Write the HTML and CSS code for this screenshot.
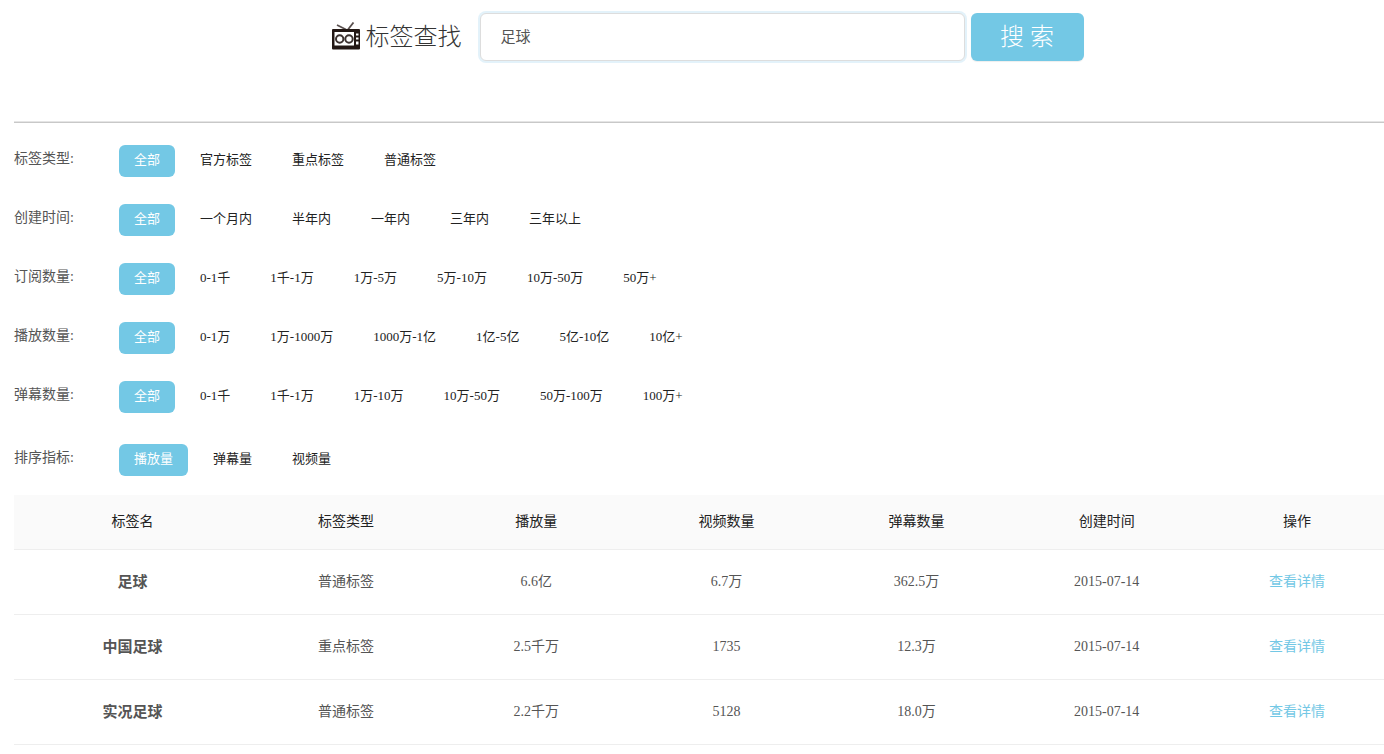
FILE: index.html
```html
<!DOCTYPE html>
<html lang="zh-CN">
<head>
<meta charset="utf-8">
<meta name="viewport" content="width=device-width, initial-scale=1">
<title>标签查找</title>
<link rel="stylesheet" href="styles.css">
</head>
<body>
<main class="page">
  <form class="search">
    <label class="search-label" for="keyword">
      <svg class="tv" viewBox="0 0 30 30" aria-hidden="true">
        <path d="M6 3L15 7.500M22.500 0.500L17 7.500" fill="none" stroke="#5a504f" stroke-width="1.800"/>
        <rect x="1" y="7" width="28" height="20.500" rx="1" fill="#231815"/>
        <rect x="3.500" y="10" width="19.500" height="13.500" fill="#fff"/>
        <circle cx="8.700" cy="17" r="3.700" fill="none" stroke="#3c3230" stroke-width="2"/>
        <circle cx="18" cy="17" r="3.700" fill="none" stroke="#3c3230" stroke-width="2"/>
        <path d="M25 11.500h2.500v2h-2.500zM25 15.500h2.500v2h-2.500zM25 19.500h2.500v3h-2.500z" fill="#fff"/>
      </svg>
      <span>标签查找</span>
    </label>
    <input class="search-input" id="keyword" type="text" value="足球">
    <button class="search-button" type="submit">搜 索</button>
  </form>
  <hr class="rule">
  <section class="filters">
    <div class="filter"><span class="filter-name">标签类型:</span><div class="options"><button class="option active">全部</button><button class="option">官方标签</button><button class="option">重点标签</button><button class="option">普通标签</button></div></div>
    <div class="filter"><span class="filter-name">创建时间:</span><div class="options"><button class="option active">全部</button><button class="option">一个月内</button><button class="option">半年内</button><button class="option">一年内</button><button class="option">三年内</button><button class="option">三年以上</button></div></div>
    <div class="filter"><span class="filter-name">订阅数量:</span><div class="options"><button class="option active">全部</button><button class="option">0-1千</button><button class="option">1千-1万</button><button class="option">1万-5万</button><button class="option">5万-10万</button><button class="option">10万-50万</button><button class="option">50万+</button></div></div>
    <div class="filter"><span class="filter-name">播放数量:</span><div class="options"><button class="option active">全部</button><button class="option">0-1万</button><button class="option">1万-1000万</button><button class="option">1000万-1亿</button><button class="option">1亿-5亿</button><button class="option">5亿-10亿</button><button class="option">10亿+</button></div></div>
    <div class="filter"><span class="filter-name">弹幕数量:</span><div class="options"><button class="option active">全部</button><button class="option">0-1千</button><button class="option">1千-1万</button><button class="option">1万-10万</button><button class="option">10万-50万</button><button class="option">50万-100万</button><button class="option">100万+</button></div></div>
    <div class="filter sort"><span class="filter-name">排序指标:</span><div class="options"><button class="option active">播放量</button><button class="option">弹幕量</button><button class="option">视频量</button></div></div>
  </section>
  <div class="results">
    <table class="table">
      <colgroup><col class="col-name"><col><col><col><col><col><col></colgroup>
      <thead>
        <tr><th>标签名</th><th>标签类型</th><th>播放量</th><th>视频数量</th><th>弹幕数量</th><th>创建时间</th><th>操作</th></tr>
      </thead>
      <tbody>
        <tr><td class="name">足球</td><td>普通标签</td><td>6.6亿</td><td>6.7万</td><td>362.5万</td><td>2015-07-14</td><td><a class="link" href="#">查看详情</a></td></tr>
        <tr><td class="name">中国足球</td><td>重点标签</td><td>2.5千万</td><td>1735</td><td>12.3万</td><td>2015-07-14</td><td><a class="link" href="#">查看详情</a></td></tr>
        <tr><td class="name">实况足球</td><td>普通标签</td><td>2.2千万</td><td>5128</td><td>18.0万</td><td>2015-07-14</td><td><a class="link" href="#">查看详情</a></td></tr>
      </tbody>
    </table>
  </div>
</main>
</body>
</html>
```
FILE: styles.css
```css
* {
  box-sizing: border-box;
}

body {
  margin: 0;
  background: #fff;
  color: #555;
  font: 14px/20px "Liberation Serif", "Noto Sans CJK SC", serif;
}

button,
input {
  font-family: inherit;
}

.page {
  padding: 13px 0 0 14px;
}

.search {
  display: flex;
  justify-content: center;
  align-items: center;
  padding-left: 16px;
}

.search-label {
  display: flex;
  align-items: center;
  gap: 5px;
  margin-right: 18px;
  color: #333;
  font-size: 24px;
  font-weight: 300;
  line-height: 46px;
}

.tv {
  width: 30px;
  height: 30px;
}

.search-input {
  flex: 0 1 485px;
  min-width: 0;
  height: 48px;
  padding: 0 20px 4px;
  border: 1px solid #ddd;
  border-radius: 6px;
  outline: none;
  box-shadow: 0 0 0 2px #e3f2fa;
  background: #fff;
  color: #555;
  font-size: 15px;
}

.search-button {
  flex: 0 0 113px;
  height: 48px;
  margin-left: 6px;
  padding: 0;
  border: 0;
  border-radius: 6px;
  box-shadow: 0 1px 1px #eee;
  background: #73c8e5;
  color: #fff;
  font-size: 24px;
  line-height: 48px;
  font-weight: 300;
}

.rule {
  height: 2px;
  margin: 60px 0 22px;
  border: 0;
  border-top: 1px solid #e5e5e5;
  background: #c8c8c8;
}

.filter {
  display: flex;
  align-items: flex-start;
  margin-bottom: 27px;
}

.filter.sort {
  margin: 31px 0 19px;
}

.filter-name {
  flex: 0 0 105px;
  line-height: 28px;
}

.options {
  display: flex;
  flex-wrap: wrap;
  gap: 10px;
}

.option {
  height: 32px;
  padding: 0 15px 2px;
  border: 0;
  border-radius: 6px;
  background: none;
  color: #222;
  font-size: 13px;
  line-height: 30px;
  cursor: pointer;
}

.option.active {
  background: #73c8e5;
  color: #fff;
}

.results {
  overflow: hidden;
}

.table {
  width: calc(100% + 8px);
  table-layout: fixed;
  border-collapse: collapse;
  text-align: center;
}

.col-name {
  width: 17.2%;
}

.table th,
.table td {
  padding: 22px 0;
  border-bottom: 1px solid #eee;
}

.table thead {
  background: #fafafa;
}

.table th {
  padding: 17px 0;
  color: #222;
  font-weight: 400;
}

.table .name {
  font-size: 15px;
  font-weight: 700;
}

.link {
  color: #73c8e5;
  text-decoration: none;
}
```
